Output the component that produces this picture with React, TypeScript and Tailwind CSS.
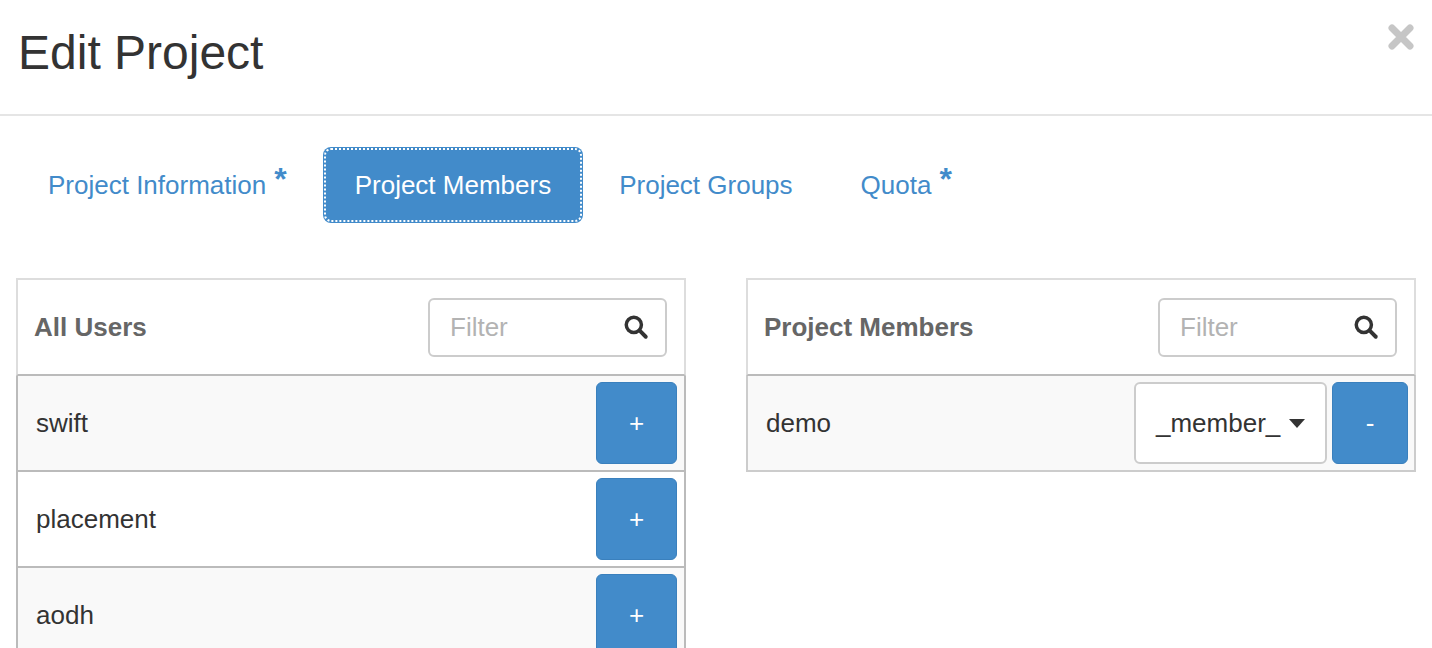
import React from 'react';
import clsx from 'clsx';

const tabs = [
  { label: 'Project Information', required: true },
  { label: 'Project Members', active: true },
  { label: 'Project Groups' },
  { label: 'Quota', required: true },
];

const allUsers = ['swift', 'placement', 'aodh'];

const SearchIcon = () => (
  <svg width="26" height="26" viewBox="0 0 24 24" className="shrink-0">
    <circle cx="10" cy="10" r="7" fill="none" stroke="#333" strokeWidth="3.2" />
    <line x1="15.2" y1="15.2" x2="21" y2="21" stroke="#333" strokeWidth="3.6" strokeLinecap="round" />
  </svg>
);

const FilterBox = () => (
  <div className="flex items-center justify-between w-[239px] h-[59px] border-2 border-[#ccc] rounded-[6px] pl-[20px] pr-[16px] bg-white">
    <span className="text-[26px] text-[#b3b3b3]">Filter</span>
    <SearchIcon />
  </div>
);

const PanelHeader = ({ title }: { title: string }) => (
  <div className="flex items-center justify-between h-[98px] pl-[16px] pr-[17px] border-x-2 border-t-2 border-[#ddd] border-b-2 border-b-[#bbb]">
    <span className="text-[26px] font-bold text-[#666]">{title}</span>
    <FilterBox />
  </div>
);

const BlueButton = ({ label, width }: { label: string; width: string }) => (
  <button className={clsx('h-[82px] rounded-[6px] bg-[#428bca] border border-[#3a80bd] text-white text-[26px] flex items-center justify-center', width)}>
    {label}
  </button>
);

export default function App() {
  return (
    <div className="w-[1432px] h-[648px] overflow-hidden bg-white font-['Liberation_Sans',Arial,sans-serif] text-[#333]">
      <div className="flex justify-between h-[116px] border-b-2 border-[#e5e5e5]">
        <h1 className="pl-[18px] pt-[26px] text-[48px] leading-[53px] font-normal">Edit Project</h1>
        <button className="mt-[24px] mr-[18px] self-start">
          <svg width="26" height="26" viewBox="0 0 26 26">
            <path d="M4 4 L22 22 M22 4 L4 22" stroke="#c6c6c6" strokeWidth="7" strokeLinecap="round" />
          </svg>
        </button>
      </div>

      <div className="flex gap-[4px] pl-[16px] pt-[31px]">
        {tabs.map((t) => (
          <div
            key={t.label}
            className={clsx(
              'h-[76px] px-[32px] rounded-[8px] flex items-center text-[26px]',
              t.active
                ? 'bg-[#428bca] text-white outline-2 outline-dotted outline-white -outline-offset-3'
                : 'text-[#428bca]'
            )}
          >
            <span className="leading-[36px]">
              {t.label}
              {t.required && (
                <span className="ml-[8px] text-[32px] font-bold leading-[0] align-[4px]">*</span>
              )}
            </span>
          </div>
        ))}
      </div>

      <div className="flex gap-[60px] px-[16px] pt-[55px]">
        <div className="w-[670px]">
          <PanelHeader title="All Users" />
          {allUsers.map((u, i) => (
            <div
              key={u}
              className={clsx(
                'flex items-center justify-between h-[96px] pl-[18px] pr-[7px] border-x-2 border-b-2 border-[#bbb]',
                i % 2 === 0 ? 'bg-[#f9f9f9]' : 'bg-white'
              )}
            >
              <span className="text-[26px]">{u}</span>
              <BlueButton label="+" width="w-[81px]" />
            </div>
          ))}
        </div>

        <div className="w-[670px]">
          <PanelHeader title="Project Members" />
          <div className="flex items-center justify-between h-[96px] pl-[18px] pr-[6px] border-x-2 border-b-2 border-[#ccc] bg-[#f9f9f9]">
            <span className="text-[26px]">demo</span>
            <div className="flex gap-[5px]">
              <div className="flex items-center justify-between w-[193px] h-[82px] border-2 border-[#ccc] rounded-[6px] bg-white pl-[20px] pr-[20px]">
                <span className="text-[26px]">_member_</span>
                <svg width="16" height="9" viewBox="0 0 16 9">
                  <path d="M0 0 L16 0 L8 9 Z" fill="#333" />
                </svg>
              </div>
              <BlueButton label="-" width="w-[76px]" />
            </div>
          </div>
        </div>
      </div>
    </div>
  );
}
